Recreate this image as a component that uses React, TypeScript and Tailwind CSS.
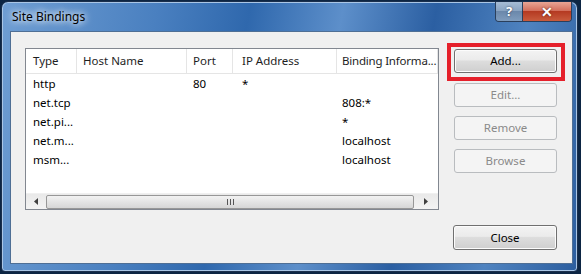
const rows = [
  { type: "http", host: "", port: "80", ip: "*", info: "" },
  { type: "net.tcp", host: "", port: "", ip: "", info: "808:*" },
  { type: "net.pi...", host: "", port: "", ip: "", info: "*" },
  { type: "net.m...", host: "", port: "", ip: "", info: "localhost" },
  { type: "msm...", host: "", port: "", ip: "", info: "localhost" },
];

const cols = [
  { label: "Type", w: "w-[51px] pl-[7px]" },
  { label: "Host Name", w: "w-[110px] pl-[6px]" },
  { label: "Port", w: "w-[46px] pl-[6px]" },
  { label: "IP Address", w: "w-[104px] pl-[9px]" },
  { label: "Binding Informa...", w: "w-[101px] pl-[5px] tracking-[-0.2px]" },
];

const Button = ({ label, disabled }: { label: string; disabled?: boolean }) => (
  <div
    className={
      disabled
        ? "w-[103px] h-[24px] rounded-[3px] border border-[#b9bcbf] bg-[#f4f4f4] text-[#8a8a8a] flex items-center justify-center"
        : "w-[103px] h-[24px] rounded-[3px] border border-[#707070] bg-[linear-gradient(#f3f3f3_0%,#ebebeb_45%,#dddddd_50%,#cfcfcf_100%)] text-black flex items-center justify-center shadow-[inset_0_0_0_1px_#fcfcfc]"
    }
  >
    {label}
  </div>
);

const App = () => {
  return (
    <div className="w-[581px] h-[274px] bg-[#0c2543] pt-[1px] pl-[1px] font-['Noto_Sans',sans-serif] text-[11.5px] leading-none select-none">
      <div className="w-[577px] h-[271px] rounded-t-[7px] rounded-b-[4px] border border-[#1b2f4c] bg-[linear-gradient(100deg,#6f9ed3_0%,#4a80c0_25%,#2f68ad_40%,#5d8fca_55%,#2b5fa2_70%,#4f83c0_85%,#2c5e9f_100%)] shadow-[inset_0_0_0_1px_#a9c6e6] flex flex-col">
        {/* title bar */}
        <div className="h-[29px] flex items-start">
          <div className="pl-[10px] pt-[9px] text-[12px] text-black [text-shadow:0_0_6px_#ffffff,0_0_10px_#ffffff]">
            Site Bindings
          </div>
          <div className="ml-auto mr-[5px] flex h-[20px] rounded-b-[4px] border border-t-0 border-[#2a3f5c] overflow-hidden">
            <div className="w-[27px] flex items-center justify-center bg-[linear-gradient(#a6bcd5_0%,#8aa4c2_45%,#6b88ab_50%,#7f9cbd_100%)] border-r border-[#2a3f5c] text-white font-bold text-[13px] [text-shadow:0_0_2px_#23344c]">
              ?
            </div>
            <div className="w-[48px] flex items-center justify-center bg-[linear-gradient(#e8a595_0%,#d3705d_45%,#b53a22_50%,#c85b3d_100%)] text-white font-bold text-[14px] [text-shadow:0_0_2px_#4d140a]">
              ✕
            </div>
          </div>
        </div>
        {/* client area */}
        <div className="ml-[8px] w-[563px] h-[233px] border border-[#4f6f95] bg-[#f0f0f0] flex pl-[14px] pt-[11px]">
          {/* list view */}
          <div className="mt-[5px] w-[414px] h-[162px] border border-[#828790] bg-white flex flex-col">
            <div className="h-[25px] flex border-b border-[#e5e5e5] text-[#1e1e1e]">
              {cols.map((c) => (
                <div key={c.label} className={`${c.w} shrink-0 border-r border-[#e5e5e5] flex items-center whitespace-nowrap`}>
                  {c.label}
                </div>
              ))}
            </div>
            <div className="flex-1 text-black">
              {rows.map((r) => (
                <div key={r.type} className="h-[19px] flex items-center">
                  <div className="w-[51px] pl-[7px]">{r.type}</div>
                  <div className="w-[110px] pl-[6px]">{r.host}</div>
                  <div className="w-[46px] pl-[6px]">{r.port}</div>
                  <div className="w-[104px] pl-[9px]">{r.ip}</div>
                  <div className="w-[101px] pl-[5px]">{r.info}</div>
                </div>
              ))}
            </div>
            {/* horizontal scrollbar */}
            <div className="h-[16px] flex items-center bg-[linear-gradient(#e9e9e9,#f3f3f3)] border-t border-[#f0f0f0]">
              <div className="w-[20px] flex items-center justify-center">
                <svg width="4" height="7" viewBox="0 0 4 7">
                  <path d="M4 0 L0 3.5 L4 7 Z" fill="#404040" />
                </svg>
              </div>
              <div className="flex-1 h-[14px] rounded-[2px] border border-[#979797] bg-[linear-gradient(#f2f2f2_0%,#e4e4e4_50%,#d6d6d6_100%)] flex items-center justify-center">
                <svg width="7" height="6" viewBox="0 0 7 6">
                  <path d="M0.5 0 V6 M3.5 0 V6 M6.5 0 V6" stroke="#555" strokeWidth="1" />
                </svg>
              </div>
              <div className="w-[24px] flex items-center justify-center">
                <svg width="4" height="7" viewBox="0 0 4 7">
                  <path d="M0 0 L4 3.5 L0 7 Z" fill="#404040" />
                </svg>
              </div>
            </div>
          </div>
          {/* buttons */}
          <div className="ml-[8px] flex flex-col">
            <div className="w-[118px] h-[38px] border-4 border-[#e5202b] pl-[3px] pt-[2px]">
              <Button label="Add..." />
            </div>
            <div className="pl-[7px] mt-[2px] flex flex-col gap-[9px]">
              <Button label="Edit..." disabled />
              <Button label="Remove" disabled />
              <Button label="Browse" disabled />
            </div>
            <div className="pl-[6px] mt-[52px]">
              <div className="w-[104px] h-[25px] rounded-[3px] border border-[#707070] bg-[linear-gradient(#f3f3f3_0%,#ebebeb_45%,#dddddd_50%,#cfcfcf_100%)] flex items-center justify-center shadow-[inset_0_0_0_1px_#fcfcfc]">
                Close
              </div>
            </div>
          </div>
        </div>
      </div>
    </div>
  );
};

export default App;
